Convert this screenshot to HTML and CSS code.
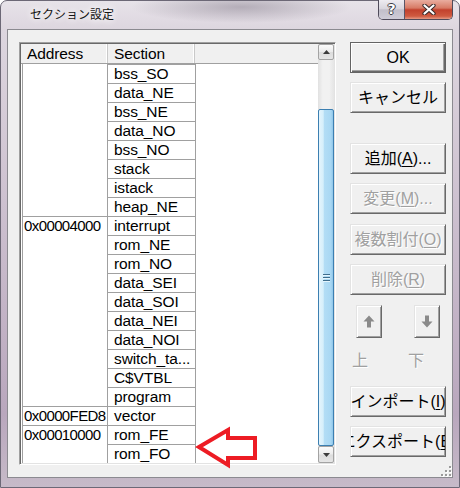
FILE: index.html
```html
<!DOCTYPE html>
<html lang="ja">
<head>
<meta charset="utf-8">
<title>セクション設定</title>
<link rel="stylesheet" href="styles.css">
</head>
<body>
<div class="window">
  <div class="titlebar">
    <span class="title">セクション設定</span>
    <div class="caption">
      <div class="cap-help">?</div>
      <div class="cap-close">
        <svg width="14" height="11" viewBox="0 0 14 11">
          <path d="M2.5 1.5 L11.5 9.5 M11.5 1.5 L2.5 9.5" stroke="#3a2a2a" stroke-width="4.2" stroke-linecap="round"/>
          <path d="M2.5 1.5 L11.5 9.5 M11.5 1.5 L2.5 9.5" stroke="#ffffff" stroke-width="2.2" stroke-linecap="round"/>
        </svg>
      </div>
    </div>
  </div>
  <div class="client">
    <div class="listview">
      <div class="lv-content">
        <div class="lv-header">
          <div class="hcell hc-addr">Address</div>
          <div class="hcell hc-sec">Section</div>
          <div class="hcell hc-rest"></div>
        </div>
        <div class="lv-body">
          <div class="group cont">
            <div class="addr"></div>
            <div class="secs">
              <div class="sec">bss_SO</div>
              <div class="sec">data_NE</div>
              <div class="sec">bss_NE</div>
              <div class="sec">data_NO</div>
              <div class="sec">bss_NO</div>
              <div class="sec">stack</div>
              <div class="sec">istack</div>
              <div class="sec">heap_NE</div>
            </div>
          </div>
          <div class="group">
            <div class="addr">0x00004000</div>
            <div class="secs">
              <div class="sec">interrupt</div>
              <div class="sec">rom_NE</div>
              <div class="sec">rom_NO</div>
              <div class="sec">data_SEI</div>
              <div class="sec">data_SOI</div>
              <div class="sec">data_NEI</div>
              <div class="sec">data_NOI</div>
              <div class="sec">switch_ta...</div>
              <div class="sec">C$VTBL</div>
              <div class="sec">program</div>
            </div>
          </div>
          <div class="group">
            <div class="addr">0x0000FED8</div>
            <div class="secs">
              <div class="sec">vector</div>
            </div>
          </div>
          <div class="group">
            <div class="addr">0x00010000</div>
            <div class="secs">
              <div class="sec">rom_FE</div>
              <div class="sec">rom_FO</div>
            </div>
          </div>
        </div>
      </div>
      <div class="vscroll">
        <div class="sb-btn sb-up">
          <svg width="7" height="4" viewBox="0 0 7 4"><path d="M0 4 L3.5 0 L7 4 Z" fill="#3c3c3c"/></svg>
        </div>
        <div class="sb-gap"></div>
        <div class="sb-thumb"><div class="grip"></div></div>
        <div class="sb-btn sb-down">
          <svg width="7" height="4" viewBox="0 0 7 4"><path d="M0 0 L3.5 4 L7 0 Z" fill="#3c3c3c"/></svg>
        </div>
      </div>
    </div>
    <div class="buttons">
      <div class="btn default">OK</div>
      <div class="btn">キャンセル</div>
      <div class="btn mt-add">追加(<u>A</u>)...</div>
      <div class="btn disabled">変更(<u>M</u>)...</div>
      <div class="btn disabled mt-1">複数割付(<u>O</u>)</div>
      <div class="btn disabled">削除(<u>R</u>)</div>
      <div class="arrows mt-1">
        <div class="btn arrow-btn">
          <svg width="12" height="13" viewBox="0 0 12 13"><path d="M6 0.5 L11.5 6.5 L8 6.5 L8 12.5 L4 12.5 L4 6.5 L0.5 6.5 Z" fill="#8a8a8a"/></svg>
        </div>
        <div class="btn arrow-btn">
          <svg width="12" height="13" viewBox="0 0 12 13"><path d="M4 0.5 L8 0.5 L8 6.5 L11.5 6.5 L6 12.5 L0.5 6.5 L4 6.5 Z" fill="#8a8a8a"/></svg>
        </div>
      </div>
      <div class="updown">
        <span class="lbl">上</span>
        <span class="lbl lbl-down">下</span>
      </div>
      <div class="btn mt-imp">インポート(<u>I</u>)</div>
      <div class="btn">エクスポート(<u>E</u>)</div>
    </div>
    <svg class="grip-corner" width="12" height="12" viewBox="0 0 12 12">
      <g fill="#ffffff">
        <rect x="10" y="2" width="2" height="2"/><rect x="10" y="6" width="2" height="2"/><rect x="6" y="6" width="2" height="2"/>
        <rect x="10" y="10" width="2" height="2"/><rect x="6" y="10" width="2" height="2"/><rect x="2" y="10" width="2" height="2"/>
      </g>
      <g fill="#9a9a9a">
        <rect x="9" y="1" width="2" height="2"/><rect x="9" y="5" width="2" height="2"/><rect x="5" y="5" width="2" height="2"/>
        <rect x="9" y="9" width="2" height="2"/><rect x="5" y="9" width="2" height="2"/><rect x="1" y="9" width="2" height="2"/>
      </g>
    </svg>
  </div>
</div>
<svg class="callout" width="70" height="48" viewBox="195 424 70 48">
  <polygon points="199,447 228,430 228,438 255,438 255,458 228,458 228,465" fill="none" stroke="#ed1c24" stroke-width="4" stroke-linejoin="miter"/>
</svg>
</body>
</html>
```

FILE: styles.css
```css
* { box-sizing: border-box; }
html, body { margin: 0; padding: 0; }
body {
  width: 460px;
  height: 488px;
  overflow: hidden;
  background: #ffffff;
  font-family: "Liberation Sans", "Noto Sans CJK JP", sans-serif;
  color: #000;
}
.window {
  width: 460px;
  height: 488px;
  border: 1px solid #6c6876;
  border-radius: 7px 7px 0 0;
  padding: 0 6px 9px 6px;
  display: flex;
  flex-direction: column;
  background:
    radial-gradient(ellipse 110px 16px at 240px 6px, rgba(140,132,146,0.55), rgba(140,132,146,0)),
    linear-gradient(180deg, #e7e3e9 0, #ddd6df 28px, #c7b9ca 55%, #b9a7bd 85%, #c6bac8 100%);
}
.titlebar {
  height: 28px;
  display: flex;
  align-items: flex-start;
  justify-content: space-between;
}
.title {
  margin: 4px 0 0 23px;
  font: 12px/18px "Noto Sans CJK JP", sans-serif;
  color: #141414;
  text-shadow: 0 0 6px #fff, 0 0 10px #fff;
}
.caption {
  display: flex;
  margin-top: -1px;
  height: 20px;
  border: 1px solid #4f4b5a;
  border-top: none;
  border-radius: 0 0 5px 5px;
  overflow: hidden;
}
.cap-help {
  width: 26px;
  border-right: 1px solid #5a5566;
  background: linear-gradient(180deg, #eeecf1 0, #d9d6de 45%, #c2bfca 52%, #cfccd7 100%);
  color: #fff;
  font: bold 14px/19px "DejaVu Sans", sans-serif;
  text-align: center;
  text-shadow: 1px 0 #3c3c44, -1px 0 #3c3c44, 0 1px #3c3c44, 0 -1px #3c3c44;
}
.cap-close {
  width: 47px;
  display: flex;
  align-items: center;
  justify-content: center;
  background: linear-gradient(180deg, #e9ad9f 0, #d77a65 42%, #c2412d 52%, #cf5a40 85%, #e59a85 100%);
}
.client {
  flex: 1;
  position: relative;
  display: flex;
  align-items: flex-start;
  border: 1px solid #8b8a90;
  background: #f0f0f0;
  padding: 12px 0 0 11px;
}
.listview {
  width: 317px;
  height: 423px;
  display: flex;
  border: 1px solid;
  border-color: #a0a0a0 #ffffff #ffffff #a0a0a0;
  box-shadow: inset 1px 1px #696969, inset -1px -1px #e3e3e3;
  padding: 1px;
  background: #ffffff;
}
.lv-content {
  width: 297px;
  display: flex;
  flex-direction: column;
}
.lv-header {
  height: 20px;
  display: flex;
  background: #f0f0f0;
  border-bottom: 1px solid #a0a0a0;
}
.hcell {
  font-size: 15.5px;
  line-height: 19px;
  padding-left: 6px;
  letter-spacing: -0.1px;
  border-right: 1px solid #c9c9c9;
  box-shadow: inset -1px 0 #ffffff;
  white-space: nowrap;
}
.hc-addr { width: 87px; }
.hc-sec { width: 87px; }
.hc-rest { flex: 1; border-right: none; box-shadow: none; }
.lv-body {
  flex: 1;
  background: #ffffff;
  padding-left: 1px;
  overflow: hidden;
}
.group { display: flex; }
.addr {
  width: 85px;
  border-left: 1px solid #a0a0a0;
  border-top: 1px solid #a0a0a0;
  padding-left: 1px;
  font-size: 15px;
  letter-spacing: -0.6px;
  line-height: 18px;
  white-space: nowrap;
}
.group.cont .addr { border-top: none; }
.secs { width: 89px; display: flex; flex-direction: column; }
.sec {
  height: 19px;
  border: 1px solid #a0a0a0;
  border-bottom: none;
  padding-left: 6px;
  font-size: 15.5px;
  letter-spacing: -0.1px;
  line-height: 18px;
  white-space: nowrap;
}
.vscroll {
  width: 16px;
  display: flex;
  flex-direction: column;
  background: linear-gradient(90deg, #e1e1e1 0, #f1f1f1 30%, #f1f1f1 70%, #e5e5e5 100%);
}
.sb-btn {
  border: 1px solid #a3a3a3;
  border-radius: 2px;
  background: linear-gradient(180deg, #fbfbfb 0, #ececec 48%, #dcdcdc 52%, #e6e6e6 100%);
  display: flex;
  align-items: center;
  justify-content: center;
}
.sb-up { height: 16px; }
.sb-down { height: 17px; }
.sb-gap { height: 49px; }
.sb-thumb {
  height: 337px;
  border: 1px solid #3c7fb1;
  border-radius: 2px;
  background: linear-gradient(90deg, #e4f4fc 0, #d6effb 30%, #b3ddf5 38%, #a8d7f3 85%, #8ec6e9 100%);
  display: flex;
  align-items: center;
  justify-content: center;
}
.grip {
  width: 7px;
  height: 1px;
  margin-top: -6px;
  background: #3f6e8d;
  box-shadow: 0 1px #e5f5fd, 0 3px #3f6e8d, 0 4px #e5f5fd, 0 6px #3f6e8d, 0 7px #e5f5fd;
}
.buttons {
  width: 96px;
  margin-left: 14px;
  display: flex;
  flex-direction: column;
  gap: 9px;
}
.btn {
  height: 31px;
  border: 1px solid;
  border-color: #e3e3e3 #696969 #696969 #e3e3e3;
  box-shadow: inset 1px 1px #ffffff, inset -1px -1px #a0a0a0;
  background: #f0f0f0;
  display: flex;
  align-items: center;
  justify-content: center;
  overflow: hidden;
  white-space: nowrap;
  font-size: 16px;
  line-height: 20px;
}
.btn u { text-underline-offset: 2px; }
.btn.default {
  border-color: #646464;
  box-shadow: inset 1px 1px #ffffff, inset -1px -1px #696969, inset -2px -2px #a0a0a0;
}
.btn.disabled {
  color: #a0a0a0;
  text-shadow: 1px 1px 0 #ffffff;
}
.mt-add { margin-top: 21px; }
.mt-1 { margin-top: 1px; }
.mt-imp { margin-top: 7px; }
.arrows {
  display: flex;
  justify-content: space-between;
  padding: 0 6px;
}
.arrow-btn {
  width: 26px;
  height: 33px;
}
.updown {
  margin-top: 4px;
  padding-left: 2px;
  display: flex;
  font-size: 16px;
  line-height: 20px;
}
.lbl {
  color: #a0a0a0;
  text-shadow: 1px 1px 0 #ffffff;
}
.lbl-down { margin-left: 40px; }
.mt-imp { margin-top: 6px; }
.grip-corner {
  position: absolute;
  right: 0;
  bottom: 0;
}
.callout {
  position: absolute;
  left: 195px;
  top: 424px;
}
```
